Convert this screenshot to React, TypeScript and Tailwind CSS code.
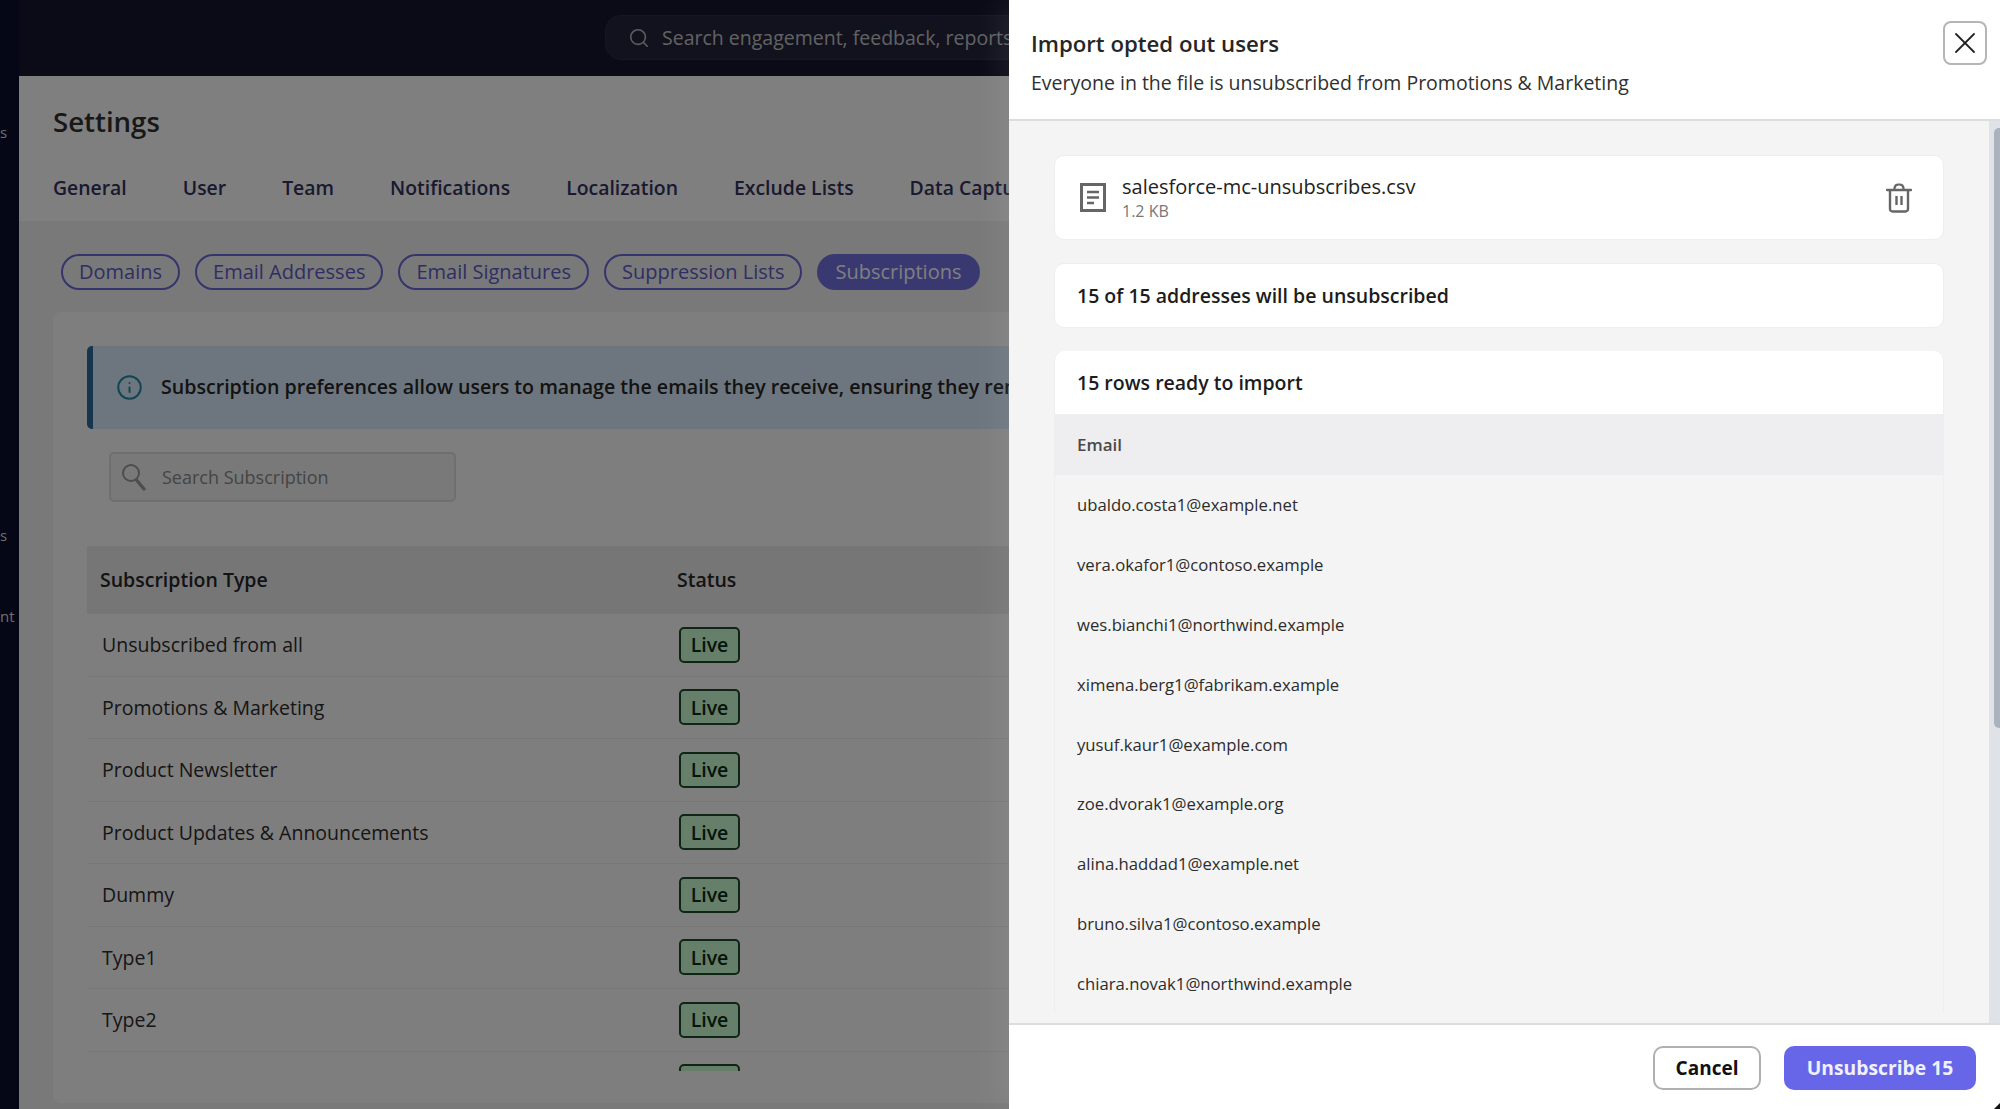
import React from "react";
import { Search, Info, X } from "lucide-react";

const topTabs = ["General", "User", "Team", "Notifications", "Localization", "Exclude Lists", "Data Capture"];
const subTabs = ["Domains", "Email Addresses", "Email Signatures", "Suppression Lists"];
const subscriptionTypes = [
  "Unsubscribed from all",
  "Promotions & Marketing",
  "Product Newsletter",
  "Product Updates & Announcements",
  "Dummy",
  "Type1",
  "Type2",
  "",
];
const emails = [
  "ubaldo.costa1@example.net",
  "vera.okafor1@contoso.example",
  "wes.bianchi1@northwind.example",
  "ximena.berg1@fabrikam.example",
  "yusuf.kaur1@example.com",
  "zoe.dvorak1@example.org",
  "alina.haddad1@example.net",
  "bruno.silva1@contoso.example",
  "chiara.novak1@northwind.example",
];

function FileIcon() {
  return (
    <svg width="26" height="29" viewBox="0 0 26 29" fill="none" className="shrink-0">
      <rect x="1.5" y="1.5" width="23" height="26" stroke="#666666" strokeWidth="3" />
      <path d="M7 9h12M7 14.5h12M7 20h7" stroke="#666666" strokeWidth="2.4" />
    </svg>
  );
}

function TrashIcon() {
  return (
    <svg width="26" height="30" viewBox="0 0 26 30" fill="none">
      <path d="M1 7h24" stroke="#666666" strokeWidth="2.4" strokeLinecap="round" />
      <path d="M8.5 7V5a4 4 0 0 1 4-3.5h1a4 4 0 0 1 4 3.5v2" stroke="#666666" strokeWidth="2.2" />
      <path d="M4 7v19a2.5 2.5 0 0 0 2.5 2.5h13A2.5 2.5 0 0 0 22 26V7" stroke="#666666" strokeWidth="2.4" />
      <path d="M10.5 13v9M15.5 13v9" stroke="#666666" strokeWidth="2.4" />
    </svg>
  );
}

function FieldSearchIcon() {
  return (
    <svg width="26" height="28" viewBox="0 0 26 28" fill="none" className="shrink-0">
      <circle cx="10" cy="10" r="8" stroke="#9a9a9a" strokeWidth="2" />
      <path d="M15.5 17L23 26" stroke="#9a9a9a" strokeWidth="3.4" strokeLinecap="round" />
    </svg>
  );
}

export default function App() {
  return (
    <div className="relative flex h-[1109px] w-[2000px] overflow-hidden bg-[#0c0e2c] font-['Open_Sans',sans-serif]">
      {/* sidebar, only the tail of the labels shows */}
      <div className="w-[19px] shrink-0 overflow-hidden text-[15px] text-[#dddddd]">
        <div className="pt-[122px] leading-[20px]">s</div>
        <div className="pt-[383px] leading-[20px]">s</div>
        <div className="pt-[61px] leading-[20px]">nt</div>
      </div>

      <div className="flex min-w-0 flex-1 flex-col">
        {/* top bar */}
        <div className="flex h-[76px] shrink-0 bg-[#14162f] pt-[15px] pl-[586px]">
          <div className="flex h-[45px] w-[700px] shrink-0 items-center gap-[12px] rounded-[16px] border border-[#2c2e48] bg-[#22243c] pl-[22px]">
            <Search className="h-[22px] w-[22px] text-[#bbbbbb]" strokeWidth={1.75} />
            <span className="whitespace-nowrap text-[19.5px] text-[#c4c4c4]">Search engagement, feedback, reports</span>
          </div>
        </div>

        <div className="flex min-h-0 flex-1 flex-col bg-[#f3f3f3]">
          {/* settings head */}
          <div className="h-[145px] shrink-0 bg-white pl-[34px]">
            <h1 className="pt-[24px] text-[27.6px] leading-[42px] font-semibold text-[#303030]">Settings</h1>
            <div className="flex gap-[56px] pt-[34px] whitespace-nowrap">
              {topTabs.map((t) => (
                <span key={t} className="text-[19.4px] leading-[24px] font-semibold text-[#32325e]">
                  {t}
                </span>
              ))}
            </div>
          </div>

          {/* sub tabs */}
          <div className="flex shrink-0 gap-[15px] pt-[33px] pl-[42px] whitespace-nowrap">
            {subTabs.map((t) => (
              <span
                key={t}
                className="flex h-[36px] items-center rounded-full border-2 border-[#6a68d8] px-[16px] text-[20px] font-medium text-[#5f5cc8]"
              >
                {t}
              </span>
            ))}
            <span className="flex h-[36px] items-center rounded-full bg-[#7270e2] px-[18px] text-[20px] font-medium text-white">
              Subscriptions
            </span>
          </div>

          {/* card */}
          <div className="mt-[22px] ml-[34px] h-[791px] w-[1400px] shrink-0 rounded-lg bg-[#fdfdfd] pt-[34px] pl-[34px]">
            <div className="flex h-[83px] items-center rounded-[5px] border-l-[6px] border-[#2d6a9f] bg-[#dbedfe] pl-[23px]">
              <Info className="h-[27px] w-[27px] text-[#1f8ba8]" strokeWidth={1.75} />
              <span className="pb-[1px] pl-[18px] text-[19.6px] font-semibold whitespace-nowrap text-[#262626]">
                Subscription preferences allow users to manage the emails they receive, ensuring they remain
              </span>
            </div>

            <div className="mt-[23px] ml-[22px] flex h-[50px] w-[347px] items-center rounded-[5px] border-2 border-[#dedee4] bg-[#f3f3f3] pl-[10px]">
              <FieldSearchIcon />
              <span className="pl-[15px] text-[18px] text-[#8a8a8a]">Search Subscription</span>
            </div>

            {/* table */}
            <div className="mt-[44px] h-[525px] overflow-hidden">
              <div className="flex h-[68px] items-center bg-[#ececec] pl-[13px] text-[19.5px] font-semibold text-[#262626]">
                <span className="w-[577px]">Subscription Type</span>
                <span>Status</span>
              </div>
              {subscriptionTypes.map((name, i) => (
                <div key={i} className="flex h-[62.5px] items-center border-b border-[#efefef] pl-[15px]">
                  <span className="w-[577px] text-[19.5px] text-[#2c2c2c]">{name}</span>
                  <span className="flex h-[36px] w-[61px] items-center justify-center rounded-[5px] border-2 border-[#1e4a2a] bg-[#ccffd4] text-[19.5px] font-semibold text-[#0a2a10]">
                    {name && "Live"}
                  </span>
                </div>
              ))}
            </div>
          </div>
        </div>
      </div>

      {/* backdrop */}
      <div className="absolute inset-0 bg-black/50" />

      {/* drawer */}
      <div className="absolute top-0 right-0 bottom-0 flex w-[991px] flex-col bg-white shadow-[-10px_0_30px_rgba(255,255,255,0.07)]">
        <div className="flex h-[121px] shrink-0 items-start justify-between border-b-2 border-[#dddddd] pt-[21px] pr-[13px] pl-[22px]">
          <div>
            <h2 className="pt-[8px] text-[22.2px] leading-[30px] font-semibold text-[#262626]">Import opted out users</h2>
            <p className="pt-[10px] text-[19.5px] leading-[28px] text-[#303030]">
              Everyone in the file is unsubscribed from Promotions & Marketing
            </p>
          </div>
          <button className="flex h-[44px] w-[44px] items-center justify-center rounded-[8px] border-2 border-[#b5b5b5] bg-white">
            <X className="h-[36px] w-[36px] text-[#222222]" strokeWidth={1.2} />
          </button>
        </div>

        <div className="flex min-h-0 flex-1 bg-[#f4f4f4]">
          <div className="min-w-0 flex-1 overflow-hidden pt-[34px] pr-[45px] pl-[45px]">
            <div className="flex h-[85px] items-center justify-between rounded-[10px] border border-[#eeeeee] bg-white pr-[31px] pl-[25px]">
              <div className="flex items-center gap-[16px]">
                <FileIcon />
                <div>
                  <div className="text-[20px] leading-[26px] font-medium text-[#222222]">salesforce-mc-unsubscribes.csv</div>
                  <div className="text-[16px] leading-[22px] text-[#777777]">1.2 KB</div>
                </div>
              </div>
              <TrashIcon />
            </div>

            <div className="mt-[23px] flex h-[65px] items-center rounded-[10px] border border-[#eeeeee] bg-white pl-[22px] text-[19.5px] font-semibold text-[#1c1c1c]">
              15 of 15 addresses will be unsubscribed
            </div>

            <div className="mt-[23px] overflow-hidden rounded-t-[10px] border-x border-[#eeeeee]">
              <div className="flex h-[63px] items-center bg-white pl-[22px] text-[19.5px] font-semibold text-[#1c1c1c]">
                15 rows ready to import
              </div>
              <div className="flex h-[61px] items-center bg-[#eeeef0] pl-[22px] text-[17px] font-semibold text-[#4a4a4a]">
                Email
              </div>
              {emails.map((email) => (
                <div key={email} className="flex h-[59.8px] items-center pl-[22px] text-[16.7px] text-[#2c2c2c]">
                  {email}
                </div>
              ))}
            </div>
          </div>

          {/* scrollbar */}
          <div className="w-[11px] shrink-0 bg-[#dfe3e7] pt-[7px] pl-[5px]">
            <div className="h-[600px] rounded-l-[5px] bg-[#a9b2bd]" />
          </div>
        </div>

        <div className="flex h-[86px] shrink-0 items-start justify-end gap-[23px] border-t-2 border-[#dddddd] pt-[21px] pr-[24px]">
          <button className="flex h-[44px] w-[108px] items-center justify-center rounded-[10px] border-2 border-[#b0b0b0] bg-white text-[19px] font-bold text-[#111111]">
            Cancel
          </button>
          <button className="flex h-[44px] w-[192px] items-center justify-center rounded-[10px] bg-[#6766e8] text-[19.3px] font-bold text-[#f0f0ff]">
            Unsubscribe 15
          </button>
        </div>
      </div>

      {/* window corner */}
      <svg width="6" height="6" viewBox="0 0 6 6" className="absolute right-0 bottom-0">
        <polygon points="6,0 6,6 0,6" fill="#111111" />
      </svg>
    </div>
  );
}
